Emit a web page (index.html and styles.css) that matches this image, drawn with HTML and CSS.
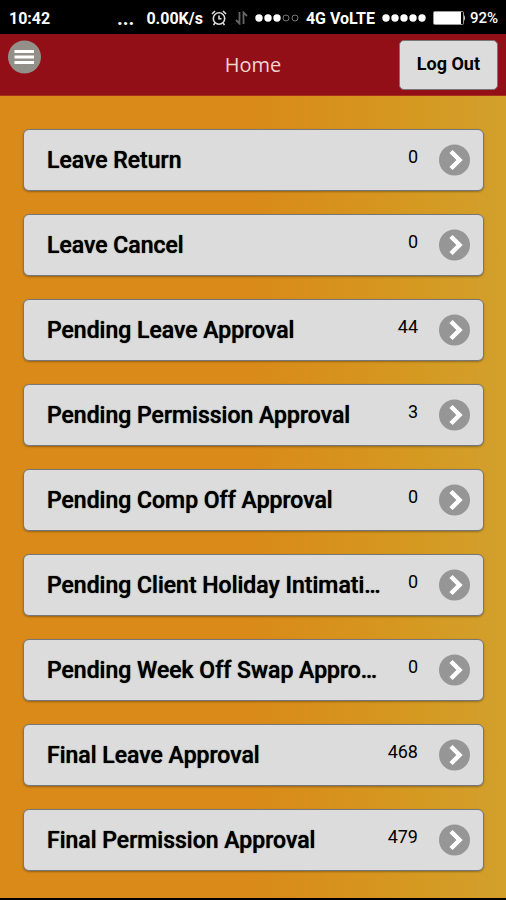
FILE: index.html
```
<!DOCTYPE html>
<html lang="en">
<head>
    <meta charset="UTF-8">
    <meta name="viewport" content="width=device-width, initial-scale=1.0">
    <title>Home</title>
    <link rel="stylesheet" href="styles.css">
</head>
<body>
    <div class="status-bar">
        <span class="clock">10:42</span>
        <span class="more">...</span>
        <span class="speed">0.00K/s</span>
        <svg class="alarm" width="16" height="16" viewBox="0 0 16 16" fill="none" stroke="#ddd" stroke-width="1.6">
            <circle cx="8" cy="8.5" r="5.7"/>
            <path d="M8 5.5v3.3h2.5M1 4l3-3M15 4l-3-3M4 13l-1.5 2M12 13l1.5 2"/>
        </svg>
        <svg class="traffic" width="13" height="14" viewBox="0 0 13 14" fill="none" stroke="#666" stroke-width="1.8">
            <path d="M4.5 1v11.5L1 9M8.5 13V1.5L12 5"/>
        </svg>
        <svg class="signal" width="44" height="10" viewBox="0 0 44 10" fill="#fff">
            <circle cx="4" cy="5" r="3.7"/>
            <circle cx="13" cy="5" r="3.7"/>
            <circle cx="22" cy="5" r="3.7"/>
            <circle cx="31" cy="5" r="3" fill="none" stroke="#777"/>
            <circle cx="40" cy="5" r="3" fill="none" stroke="#777"/>
        </svg>
        <span class="network">4G VoLTE</span>
        <svg class="signal" width="44" height="10" viewBox="0 0 44 10" fill="#fff">
            <circle cx="4" cy="5" r="3.7"/>
            <circle cx="13" cy="5" r="3.7"/>
            <circle cx="22" cy="5" r="3.7"/>
            <circle cx="31" cy="5" r="3.7"/>
            <circle cx="40" cy="5" r="3.7"/>
        </svg>
        <svg class="battery" width="33" height="14" viewBox="0 0 33 14">
            <rect x=".5" y=".5" width="30" height="13" rx="1" fill="#000" stroke="#999"/>
            <rect x="1" y="1" width="27" height="12" fill="#fff"/>
            <path d="M31 4q2 3 0 6z" fill="#ddd"/>
        </svg>
        <span class="percent">92%</span>
    </div>

    <header class="header">
        <button class="menu-btn" aria-label="Menu">
            <svg width="34" height="34" viewBox="0 0 34 34">
                <circle cx="16.5" cy="17" r="16.5" fill="#929089"/>
                <path d="M6.5 11.5h19.5M6.5 17h19.5M6.5 22.5h19.5" stroke="#fff" stroke-width="3"/>
            </svg>
        </button>
        <h1>Home</h1>
        <button class="logout-btn">Log Out</button>
    </header>

    <main class="content">
        <button class="item">
            <span class="label">Leave Return</span>
            <span class="count">0</span>
            <svg class="arrow" viewBox="0 0 32 32"><use href="#chevron"/></svg>
        </button>
        <button class="item">
            <span class="label">Leave Cancel</span>
            <span class="count">0</span>
            <svg class="arrow" viewBox="0 0 32 32"><use href="#chevron"/></svg>
        </button>
        <button class="item">
            <span class="label">Pending Leave Approval</span>
            <span class="count">44</span>
            <svg class="arrow" viewBox="0 0 32 32"><use href="#chevron"/></svg>
        </button>
        <button class="item">
            <span class="label">Pending Permission Approval</span>
            <span class="count">3</span>
            <svg class="arrow" viewBox="0 0 32 32"><use href="#chevron"/></svg>
        </button>
        <button class="item">
            <span class="label">Pending Comp Off Approval</span>
            <span class="count">0</span>
            <svg class="arrow" viewBox="0 0 32 32"><use href="#chevron"/></svg>
        </button>
        <button class="item">
            <span class="label">Pending Client Holiday Intimation</span>
            <span class="count">0</span>
            <svg class="arrow" viewBox="0 0 32 32"><use href="#chevron"/></svg>
        </button>
        <button class="item">
            <span class="label">Pending Week Off Swap Approval</span>
            <span class="count">0</span>
            <svg class="arrow" viewBox="0 0 32 32"><use href="#chevron"/></svg>
        </button>
        <button class="item">
            <span class="label">Final Leave Approval</span>
            <span class="count">468</span>
            <svg class="arrow" viewBox="0 0 32 32"><use href="#chevron"/></svg>
        </button>
        <button class="item">
            <span class="label">Final Permission Approval</span>
            <span class="count">479</span>
            <svg class="arrow" viewBox="0 0 32 32"><use href="#chevron"/></svg>
        </button>
    </main>

    <svg width="0" height="0" class="sprite">
        <symbol id="chevron" viewBox="0 0 32 32">
            <circle cx="15.500" cy="16" r="15.5" fill="#969696"/>
            <path d="M12 7.500l8.500 8.500-8.500 8.500" fill="none" stroke="#fff" stroke-width="4.500"/>
        </symbol>
    </svg>
</body>
</html>
```
FILE: styles.css
```
* {
    box-sizing: border-box;
}

body {
    margin: 0;
    min-height: 100vh;
    display: flex;
    flex-direction: column;
    background: #000;
    font-family: Roboto, "Liberation Sans", sans-serif;
}

button {
    margin: 0;
    font-family: inherit;
    color: #000;
    cursor: pointer;
}

.status-bar {
    display: flex;
    align-items: center;
    height: 34px;
    padding: 2px 8px 0 9px;
    background: #000;
    color: #fff;
    font-size: 16px;
    font-weight: 700;
    white-space: nowrap;
}

.status-bar svg {
    flex: none;
}

.clock {
    margin-right: auto;
}

.more {
    margin-right: 12px;
    font-size: 20px;
    line-height: 16px;
}

.speed,
.alarm {
    margin-right: 8px;
}

.traffic,
.signal,
.network {
    margin-right: 7px;
}

.battery {
    margin-right: 4px;
}

.percent {
    font-size: 15px;
    font-weight: 500;
}

.header {
    display: grid;
    grid-template-columns: 1fr auto 1fr;
    align-items: center;
    height: 62px;
    padding: 0 8px;
    background: #930f18;
    border-bottom: 1px solid #a8301a;
}

.header h1 {
    margin: 0;
    color: #f0d4d4;
    font-family: "Open Sans", "Noto Sans", sans-serif;
    font-size: 20px;
    font-weight: 400;
}

.menu-btn {
    align-self: start;
    justify-self: start;
    width: 34px;
    height: 34px;
    margin-top: 6px;
    padding: 0;
    background: none;
    border: none;
}

.menu-btn svg {
    display: block;
}

.logout-btn {
    justify-self: end;
    height: 50px;
    padding: 0 17px 2px;
    background: #dcdcdc;
    border: 1px solid #77777a;
    border-radius: 5px;
    font-size: 18px;
    font-weight: 700;
}

.content {
    flex: 1;
    display: flex;
    flex-direction: column;
    gap: 23px;
    margin-bottom: 3px;
    padding: 33px 22px 27px 23px;
    background: linear-gradient(90deg, #d98a18 0%, #d98a18 50%, #d59820 80%, #d2a02c 100%);
}

.item {
    display: flex;
    align-items: center;
    width: 100%;
    height: 62px;
    padding: 0 12px 0 23px;
    background: #dcdcdc;
    border: 1px solid #77777a;
    border-radius: 6px;
    box-shadow: 0 1px 2px rgba(0, 0, 0, 0.3);
    text-align: left;
}

.label {
    flex: 1;
    max-width: 338px;
    margin-right: auto;
    padding-top: 1px;
    overflow: hidden;
    font-size: 23px;
    font-weight: 500;
    line-height: 30px;
    text-overflow: ellipsis;
    text-shadow: 0 0 1px #000;
    white-space: nowrap;
}

.count {
    padding-bottom: 6px;
    margin-right: 21px;
    font-size: 18px;
    font-weight: 400;
    line-height: 22px;
}

.arrow {
    flex: none;
    width: 32px;
    height: 32px;
}

.sprite {
    position: absolute;
}
```
